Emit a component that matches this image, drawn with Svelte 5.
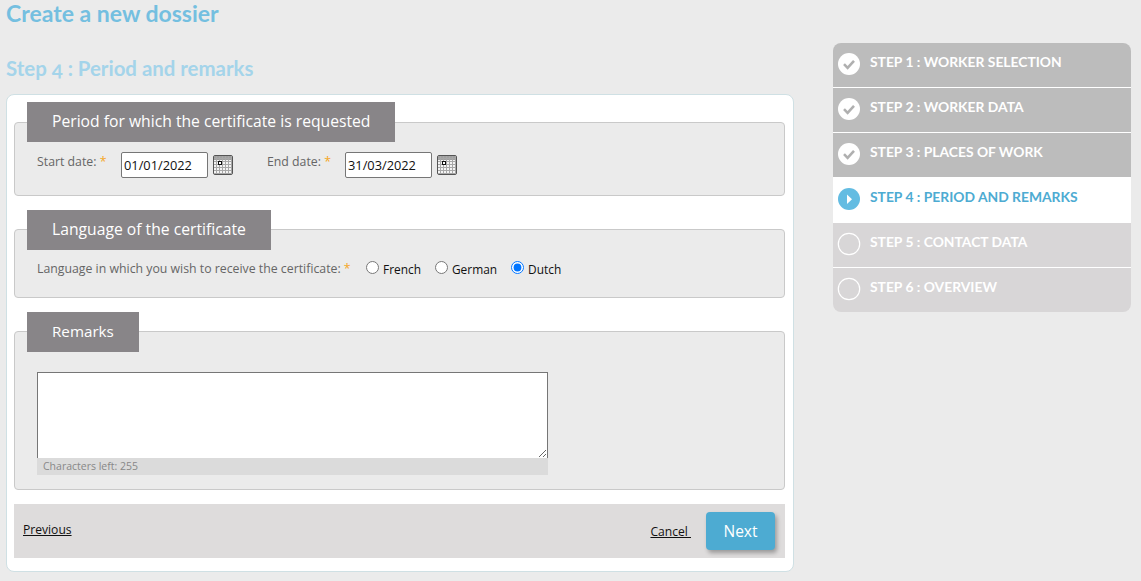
<script>
  const steps = [
    { label: 'STEP 1 : WORKER SELECTION', state: 'done' },
    { label: 'STEP 2 : WORKER DATA', state: 'done' },
    { label: 'STEP 3 : PLACES OF WORK', state: 'done' },
    { label: 'STEP 4 : PERIOD AND REMARKS', state: 'current' },
    { label: 'STEP 5 : CONTACT DATA', state: 'todo' },
    { label: 'STEP 6 : OVERVIEW', state: 'todo' },
  ];
  const languages = ['French', 'German', 'Dutch'];
  let language = $state('Dutch');
  let remarks = $state('');
  const gridLines = [3, 6, 9, 12, 15, 18];
</script>

{#snippet calendar()}
  <svg class="cal" width="20" height="20" viewBox="0 0 20 20" aria-hidden="true">
    <rect x="0.5" y="0.5" width="19" height="19" rx="1.5" fill="#f4f4f4" stroke="#555" />
    <rect x="1" y="1" width="18" height="4" fill="#a0a0a0" />
    {#each gridLines as p}
      <path d="M{p + 0.5} 1V19M1 {p + 0.5}H19" stroke="#a8a8a8" stroke-width="1" />
    {/each}
    <rect x="5.5" y="6.5" width="3" height="3" fill="#fff" stroke="#111" />
  </svg>
{/snippet}

<div class="page">
  <main>
    <h1>Create a new dossier</h1>
    <h2>Step 4 : Period and remarks</h2>
    <div class="card">
      <section>
        <div class="legend">Period for which the certificate is requested</div>
        <div class="dates">
          <label class="start"><span>Start date: <i>*</i></span><input value="01/01/2022" /></label>
          {@render calendar()}
          <label class="end"><span>End date: <i>*</i></span><input value="31/03/2022" /></label>
          {@render calendar()}
        </div>
      </section>
      <section>
        <div class="legend">Language of the certificate</div>
        <div class="langs">
          <span class="q">Language in which you wish to receive the certificate: <i>*</i></span>
          {#each languages as l}
            <label class="radio">
              <input type="radio" name="lang" value={l} bind:group={language} />{l}
            </label>
          {/each}
        </div>
      </section>
      <section>
        <div class="legend short">Remarks</div>
        <div class="remarks">
          <textarea bind:value={remarks}></textarea>
          <div class="left">Characters left: {255 - remarks.length}</div>
        </div>
      </section>
      <div class="footer">
        <a href="#prev" class="prev">Previous</a>
        <a href="#cancel" class="cancel">Cancel&nbsp;</a>
        <button type="button">Next</button>
      </div>
    </div>
  </main>

  <nav>
    {#each steps as step}
      <div class="step {step.state}">
        <svg width="24" height="24" viewBox="0 0 24 24" aria-hidden="true">
          {#if step.state === 'done'}
            <circle cx="12" cy="12" r="11" fill="#fff" />
            <path d="M7 12.2l3.6 3.6 6.4-7" fill="none" stroke="#b0b0b0" stroke-width="2.6" />
          {:else if step.state === 'current'}
            <circle cx="12" cy="12" r="11" fill="#63bce2" />
            <path d="M10 7.5l5 4.7-5 4.7z" fill="#fff" />
          {:else}
            <circle cx="12" cy="12" r="10.7" fill="none" stroke="#fff" stroke-width="1.2" />
          {/if}
        </svg>
        <span>{step.label}</span>
      </div>
    {/each}
  </nav>
</div>

<style>
  :global(body) {
    background: #ebebeb;
  }
  .page {
    display: flex;
    align-items: flex-start;
    width: 1141px;
    height: 581px;
    overflow: hidden;
    background: #ebebeb;
    font-family: 'Open Sans', sans-serif;
  }
  main {
    width: 788px;
    margin-left: 6px;
  }
  h1,
  h2 {
    margin: 0;
    font-family: Lato, sans-serif;
    font-weight: 700;
    white-space: nowrap;
  }
  h1 {
    height: 27px;
    line-height: 27px;
    font-size: 23px;
    color: #74bfe0;
  }
  h2 {
    margin-top: 28px;
    height: 26px;
    line-height: 26px;
    font-size: 20.4px;
    font-variant-numeric: oldstyle-nums;
    color: #a4d4ea;
  }
  .card {
    box-sizing: border-box;
    height: 478px;
    margin-top: 13px;
    padding: 27px 8px 0 7px;
    background: #fff;
    border: 1px solid #cfe0e4;
    border-radius: 8px;
  }
  section {
    margin-bottom: 33px;
    background: #ebebeb;
    border: 1px solid #c9c9c9;
    border-radius: 4px;
  }
  .legend {
    width: fit-content;
    box-sizing: border-box;
    height: 40px;
    margin: -20px 0 0 12px;
    padding: 0 25px;
    line-height: 39px;
    background: #888588;
    color: #fff;
    font-size: 15.7px;
    white-space: nowrap;
  }
  .legend.short {
    font-size: 15.2px;
  }
  section:first-child .legend {
    margin-top: -21px;
  }
  i {
    font-style: normal;
    color: #f5a623;
  }
  .dates,
  .langs {
    display: flex;
    align-items: center;
    padding-left: 22px;
    font-size: 12.3px;
    color: #666;
  }
  .dates {
    height: 53px;
    padding-bottom: 8px;
    box-sizing: border-box;
    padding-top: 1px;
  }
  .dates label {
    display: flex;
    align-items: center;
  }
  .dates label span {
    position: relative;
    top: -4px;
  }
  .start span {
    width: 84px;
  }
  .end {
    margin-left: 34px;
  }
  .end span {
    width: 78px;
  }
  .dates input {
    box-sizing: border-box;
    width: 87px;
    height: 26px;
    padding: 0 2px;
    border: 1px solid #767676;
    border-radius: 2px;
    background: #fff;
    font: 12.8px 'Open Sans', sans-serif;
    color: #111;
  }
  .cal {
    margin-left: 5px;
  }
  .langs {
    height: 47px;
    padding-bottom: 10px;
    box-sizing: border-box;
  }
  .q {
    width: 329px;
    white-space: nowrap;
  }
  .radio {
    display: flex;
    align-items: center;
    margin-right: 14px;
    font-size: 11.9px;
    color: #111;
  }
  .radio input {
    margin: 0 4px 2px 0;
  }
  .remarks {
    padding: 20px 22px 14px;
  }
  textarea {
    display: block;
    box-sizing: border-box;
    width: 511px;
    height: 86px;
    margin: 0;
    border: 1px solid #767676;
    border-bottom: 0;
    background: #fff;
    border-radius: 0;
  }
  .left {
    width: 511px;
    height: 17px;
    line-height: 17px;
    padding-left: 6px;
    box-sizing: border-box;
    background: #dbdbdb;
    color: #888;
    font-size: 10.5px;
  }
  .footer {
    display: flex;
    align-items: center;
    height: 54px;
    margin-top: -19px;
    padding: 0 10px 0 9px;
    background: #dedcdc;
    font-size: 12.1px;
  }
  .footer a {
    color: #111;
    text-decoration: underline;
  }
  .prev {
    position: relative;
    top: -2px;
  }
  .cancel {
    margin-left: auto;
    margin-right: 15px;
  }
  button {
    width: 69px;
    height: 38px;
    border: 0;
    border-radius: 4px;
    background: #4dabd2;
    color: #fff;
    font: 15.5px 'Open Sans', sans-serif;
    box-shadow: 2px 3px 4px rgba(0, 0, 0, 0.3);
  }
  nav {
    width: 298px;
    margin: 43px 0 0 39px;
    border-radius: 8px;
    overflow: hidden;
  }
  .step {
    display: flex;
    align-items: flex-start;
    box-sizing: border-box;
    height: 45px;
    padding: 9px 0 0 4px;
    border-bottom: 1px solid #fff;
    background: #bcbcbc;
    color: #fff;
    font-family: Lato, sans-serif;
    font-size: 13.85px;
    font-weight: 700;
  }
  .step span {
    margin: 0 0 0 9px;
    line-height: 20px;
  }
  .step.current {
    background: #fff;
    color: #4dabd2;
  }
  .step.todo {
    background: #d8d6d7;
  }
  .step:last-child {
    height: 44px;
    border-bottom: 0;
  }
</style>
